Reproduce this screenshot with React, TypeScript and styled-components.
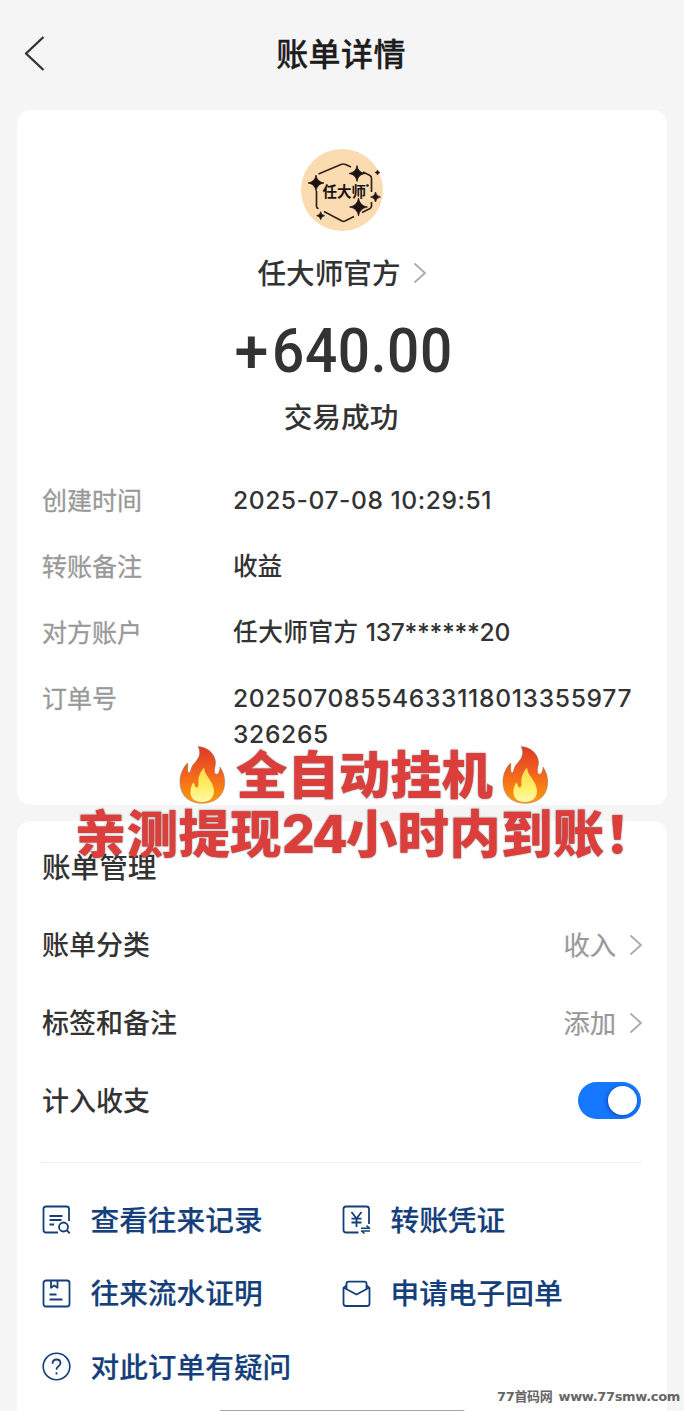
import React from 'react';
import styled, { createGlobalStyle } from 'styled-components';

const cjk = '"Noto Sans CJK SC", sans-serif';

const GlobalStyle = createGlobalStyle`
  * { box-sizing: border-box; }
  body { margin: 0; background: #f5f5f5; font-family: ${cjk}; color: #333; }
`;

const Page = styled.main`
  position: relative;
  width: 684px;
  height: 1411px;
  overflow: hidden;
  background: #f5f5f5;
`;

const Header = styled.header`
  display: grid;
  grid-template-columns: 60px 1fr 60px;
  align-items: center;
  height: 110px;
  padding: 0 0 4px 0;
`;

const BackButton = styled.button`
  display: flex;
  padding: 0 0 0 22px;
  border: 0;
  background: none;
`;

const Title = styled.h1`
  margin: 0;
  padding: 0 2px 3px 0;
  text-align: center;
  font-size: 32px;
  font-weight: 500;
  line-height: 44px;
  letter-spacing: 0.4px;
  color: #1c1c1c;
  -webkit-text-stroke: 0.3px #1c1c1c;
`;

const Card = styled.section<{ $height: number; $top: number }>`
  display: flex;
  flex-direction: column;
  height: ${(p) => p.$height}px;
  margin: 0 17px 16px;
  padding: ${(p) => p.$top}px 25px 0;
  border-radius: 14px;
  background: #fff;
`;

const Summary = styled.div`
  display: flex;
  flex-direction: column;
  align-items: center;
`;

const Payee = styled.div`
  display: flex;
  align-items: center;
  gap: 13px;
  height: 40px;
  margin-top: 22px;
  padding-left: 1px;
  font-size: 28.6px;
  font-weight: 500;
`;

const PayeeName = styled.span`
  padding-bottom: 3px;
`;

const Amount = styled.div`
  display: flex;
  justify-content: center;
  height: 60px;
  margin-top: 28px;
  font: 500 61px/60px Roboto, sans-serif;
`;

const Plus = styled.span`
  width: 37px;
`;

const Digits = styled.span`
  width: 178px;
  letter-spacing: 0.7px;
  white-space: nowrap;
  transform: scaleX(0.93);
  transform-origin: left center;
`;

const Status = styled.div`
  height: 40px;
  margin-top: 15px;
  margin-bottom: 1px;
  padding-right: 2px;
  font-size: 28.7px;
  font-weight: 500;
  line-height: 40px;
`;

const Details = styled.dl`
  display: grid;
  grid-template-columns: 191px 1fr;
  row-gap: 30px;
  margin: 46px 0 0;
  font-size: 25px;
  line-height: 36px;
`;

const Label = styled.dt`
  margin-top: -2px;
  color: #999;
  font-weight: 400;
  -webkit-text-stroke: 0.3px #999;
`;

const Value = styled.dd<{ $spacing?: number }>`
  margin: -1px 0 1px;
  font-family: Inter, ${cjk};
  font-size: 24.6px;
  font-weight: 500;
  letter-spacing: ${(p) => p.$spacing ?? 0}px;
  white-space: pre-line;
`;

const Masked = styled.span`
  letter-spacing: -0.3px;
`;

const SectionTitle = styled.h2`
  margin: -1px 0 20px;
  font-size: 28.6px;
  font-weight: 500;
  line-height: 40px;
`;

const SettingRow = styled.div`
  display: flex;
  align-items: center;
  justify-content: space-between;
  height: 78px;
  font-size: 27px;
  font-weight: 500;
`;

const SettingLabel = styled.span`
  padding-bottom: 4px;
`;

const SettingValue = styled.span`
  display: flex;
  align-items: center;
  gap: 13px;
  margin-right: -1px;
  color: #999;
  font-size: 26.3px;
  font-weight: 400;
`;

const SettingValueText = styled.span`
  padding-bottom: 4px;
  -webkit-text-stroke: 0.2px #999;
`;

const Switch = styled.button`
  display: flex;
  justify-content: flex-end;
  align-items: center;
  width: 63px;
  height: 37px;
  margin: 0 1px 1px 0;
  padding: 0 4px;
  border: 0;
  border-radius: 19px;
  background: #1677ff;
`;

const Knob = styled.span`
  width: 29px;
  height: 29px;
  border-radius: 50%;
  background: #fff;
  box-shadow: -1px 1px 4px rgba(0, 20, 80, 0.45);
`;

const Divider = styled.hr`
  width: 100%;
  height: 1px;
  margin: 22px 0 20px;
  border: 0;
  background: #eee;
`;

const Links = styled.nav`
  display: grid;
  grid-template-columns: 300px 1fr;
  grid-auto-rows: 73.5px;
`;

const LinkItem = styled.a`
  display: flex;
  align-items: center;
  gap: 19.5px;
  color: #153f7a;
  font-size: 28.7px;
  font-weight: 500;
  white-space: nowrap;
  -webkit-text-stroke: 0.15px #153f7a;
`;

const LinkText = styled.span`
  padding-bottom: 3px;
`;

const Banner = styled.div`
  position: absolute;
  top: 745px;
  left: 75px;
  display: flex;
  flex-direction: column;
  width: 580px;
  color: #dc3e3b;
  font-size: 51.4px;
  font-weight: 900;
  line-height: 60px;
  text-shadow: 0 0 2px rgba(70, 90, 90, 0.75);
  white-space: nowrap;
`;

const BannerLine = styled.div<{ $indent?: number }>`
  display: flex;
  align-items: center;
  height: 60px;
  padding-left: ${(p) => p.$indent ?? 0}px;
`;

const BannerWords = styled.span`
  margin: 0 8px;
  padding-bottom: 6px;
`;

const BannerSentence = styled.span`
  padding-bottom: 5px;
  letter-spacing: 0.3px;
`;

const BannerDigits = styled.span`
  font-family: Inter, sans-serif;
  font-size: 52px;
  font-weight: 800;
  letter-spacing: -2px;
`;

const Watermark = styled.div`
  position: absolute;
  right: 4px;
  bottom: 4px;
  display: flex;
  gap: 6px;
  color: #666;
  font: 700 13px/20px "DejaVu Sans", ${cjk};
  letter-spacing: -0.33px;
  white-space: nowrap;
`;

const HomeBar = styled.div`
  position: absolute;
  bottom: -3px;
  left: 219px;
  width: 246px;
  height: 4px;
  border-radius: 2px;
  background: #aaa;
`;

const Chevron = () => (
  <svg width="14" height="22" viewBox="0 0 14 22" fill="none" stroke="#aaa" strokeWidth="1.8">
    <path d="M1.500 1.500 12 11 1.500 20.500" />
  </svg>
);

const Star = ({ x, y, r }: { x: number; y: number; r: number }) => {
  const q = r * 0.13;
  return (
    <path
      d={`M${x} ${y - r}Q${x + q} ${y - q} ${x + r} ${y}Q${x + q} ${y + q} ${x} ${y + r}Q${x - q} ${y + q} ${x - r} ${y}Q${x - q} ${y - q} ${x} ${y - r}Z`}
      fill="#1b1213"
      stroke="#1b1213"
      strokeWidth="0.7"
    />
  );
};

const Avatar = () => (
  <svg width="82" height="82" viewBox="0 0 82 82">
    <circle cx="41" cy="41" r="41" fill="#fbdcb0" />
    <g fill="none" stroke="#35211a" strokeWidth="1.7" strokeLinejoin="round">
      <path d="M17.500 25 40 15.500q2.300-1 4.600 0L50 18" />
      <path d="M62 23 69 26.500q1.500 1 1.500 3V43" />
      <path d="M70.500 53v4q0 1.500-1.500 2.500L61 63.500M53 67.500l-9 4.500q-1.500.7-3 0L23 62.500" />
      <path d="M15.500 42V57.500q0 1.300 2 2.300" />
    </g>
    <Star x={15} y={34} r={8} />
    <Star x={56} y={24.500} r={8} />
    <Star x={57.500} y={58} r={9} />
    <Star x={74.500} y={48} r={5} />
    <Star x={19.700} y={66.700} r={4} />
    <Star x={76.500} y={23.500} r={2.500} />
    <text x="21.500" y="47.500" fontFamily="Noto Sans CJK SC, sans-serif" fontSize="14.500" fontWeight="700" fill="#1b1213">任大师</text>
    <circle cx="66.500" cy="36.500" r="1.300" fill="#1b1213" />
  </svg>
);

const FlameSvg = styled.svg`
  flex: none;
`;

const Flame = () => (
  <FlameSvg width="50" height="60" viewBox="0 0 50 60">
    <defs>
      <linearGradient id="flameOuter" x1="0" y1="0" x2="0" y2="1">
        <stop offset="0" stopColor="#dc3a25" />
        <stop offset=".5" stopColor="#f4661c" />
        <stop offset="1" stopColor="#ff9c08" />
      </linearGradient>
      <linearGradient id="flameInner" x1="0" y1="0" x2="0" y2="1">
        <stop offset="0" stopColor="#ffd84c" />
        <stop offset=".6" stopColor="#fff06a" />
        <stop offset="1" stopColor="#fff9b0" />
      </linearGradient>
    </defs>
    <path
      d="M20 1.500C30 2 37 9 37.500 17c.2 4-2 8-.5 11.500 2 2.500 5-1 5-6.500 6.500 9 6.500 23-1.500 30.500C32 60.500 14 60.500 6.500 51 0 42.500 0 28 9.500 18c1 2-1 8 1.500 10 2-.5 1.500-5.500 4.700-9C20 14.500 24 9 20 1.500Z"
      fill="url(#flameOuter)"
      stroke="#8a7567"
      strokeOpacity=".6"
      strokeWidth=".8"
    />
    <path
      d="M26 22.500C26.500 31 35.500 35.500 36 46c0 7-5 11-12 11-7.500 0-12-4-11.500-11 .3-4 1-6 3-8.500 1.500 1.500 1 4.500 3 5 3 0 1.500-5 2-9 .8-4 2.500-8 5.500-11Z"
      fill="url(#flameInner)"
    />
  </FlameSvg>
);

type LinkIconKind = 'records' | 'voucher' | 'statement' | 'mail' | 'question';

const LinkIcon = ({ kind }: { kind: LinkIconKind }) => (
  <svg width="29" height="29" viewBox="0 0 29 29" fill="none" stroke="#153f7a" strokeWidth="1.8" strokeLinejoin="round">
    {kind === 'records' && (
      <>
        <path d="M16 27.500H4q-2.500 0-2.500-2.500V4Q1.500 1.500 4 1.500h20.500Q27 1.500 27 4v12" />
        <path d="M7.500 11h13M7.500 15h12M7.500 19.500h4.500" />
        <circle cx="21.500" cy="22" r="4.500" />
        <path d="m24.500 25 3.300 3.300" />
      </>
    )}
    {kind === 'voucher' && (
      <>
        <path d="M16.500 27.500H4q-2.500 0-2.500-2.500V4Q1.500 1.500 4 1.500h20.500Q27 1.500 27 4v15" />
        <path d="m9.500 7 5 6.500 5-6.500M9.500 13.700h10M9.500 17.500h10M14.500 13.500V22" />
        <path d="M19 23.200h8.500l-3-2.500M28 26h-8.500l3 2.500" strokeWidth="1.500" />
      </>
    )}
    {kind === 'statement' && (
      <>
        <rect x="1.500" y="1.500" width="26" height="26" rx="2.500" />
        <path d="M9 1.500v7.300l3.200-2.300 3.300 2.300V1.500M7.500 15.500h7M7.500 20.500h13" />
      </>
    )}
    {kind === 'mail' && (
      <>
        <path d="M4.500 6.500 1.500 9V24.500Q1.500 27 4 27h21q2.500 0 2.500-2.500V9l-3-2.500" />
        <path d="M4.500 9.500V4.500Q4.500 2.700 6.500 2.700h16q2 0 2 1.800v5M1.500 8.500 14.500 15.500 27.500 8.500" />
      </>
    )}
    {kind === 'question' && (
      <>
        <circle cx="14.500" cy="14.500" r="13.300" strokeWidth="1.600" />
        <path d="M10.500 11.700q.2-4.200 4-4.200t4 3.600q0 2-2.300 3.500-1.700 1.100-1.700 3.200M14.500 20.200v2.200" />
      </>
    )}
  </svg>
);

const links: { kind: LinkIconKind; text: string }[] = [
  { kind: 'records', text: '查看往来记录' },
  { kind: 'voucher', text: '转账凭证' },
  { kind: 'statement', text: '往来流水证明' },
  { kind: 'mail', text: '申请电子回单' },
  { kind: 'question', text: '对此订单有疑问' },
];

export default function App() {
  return (
    <Page>
      <GlobalStyle />
      <Header>
        <BackButton aria-label="返回">
          <svg width="24" height="36" viewBox="0 0 24 36" fill="none" stroke="#333" strokeWidth="2.400" strokeLinejoin="round">
            <path d="M21.500 2 4 18.500 21.500 35" />
          </svg>
        </BackButton>
        <Title>账单详情</Title>
      </Header>

      <Card $height={695} $top={39}>
        <Summary>
          <Avatar />
          <Payee>
            <PayeeName>任大师官方</PayeeName>
            <Chevron />
          </Payee>
          <Amount><Plus>+</Plus><Digits>640.00</Digits></Amount>
          <Status>交易成功</Status>
        </Summary>
        <Details>
          <Label>创建时间</Label>
          <Value $spacing={0.55}>2025-07-08 10:29:51</Value>
          <Label>转账备注</Label>
          <Value>收益</Value>
          <Label>对方账户</Label>
          <Value $spacing={0.55}>任大师官方 <Masked>137******20</Masked></Value>
          <Label>订单号</Label>
          <Value $spacing={0.68}>{'20250708554633118013355977\n326265'}</Value>
        </Details>
      </Card>

      <Card $height={620} $top={26}>
        <SectionTitle>账单管理</SectionTitle>
        <SettingRow>
          <SettingLabel>账单分类</SettingLabel>
          <SettingValue><SettingValueText>收入</SettingValueText><Chevron /></SettingValue>
        </SettingRow>
        <SettingRow>
          <SettingLabel>标签和备注</SettingLabel>
          <SettingValue><SettingValueText>添加</SettingValueText><Chevron /></SettingValue>
        </SettingRow>
        <SettingRow>
          <SettingLabel>计入收支</SettingLabel>
          <Switch role="switch" aria-checked="true" aria-label="计入收支"><Knob /></Switch>
        </SettingRow>
        <Divider />
        <Links>
          {links.map(({ kind, text }) => (
            <LinkItem key={kind}><LinkIcon kind={kind} /><LinkText>{text}</LinkText></LinkItem>
          ))}
        </Links>
      </Card>

      <Banner>
        <BannerLine $indent={103}>
          <Flame />
          <BannerWords>全自动挂机</BannerWords>
          <Flame />
        </BannerLine>
        <BannerLine>
          <BannerSentence>亲测提现<BannerDigits>24</BannerDigits>小时内到账！</BannerSentence>
        </BannerLine>
      </Banner>

      <HomeBar />
      <Watermark><span>77首码网</span><span>www.77smw.com</span></Watermark>
    </Page>
  );
}
